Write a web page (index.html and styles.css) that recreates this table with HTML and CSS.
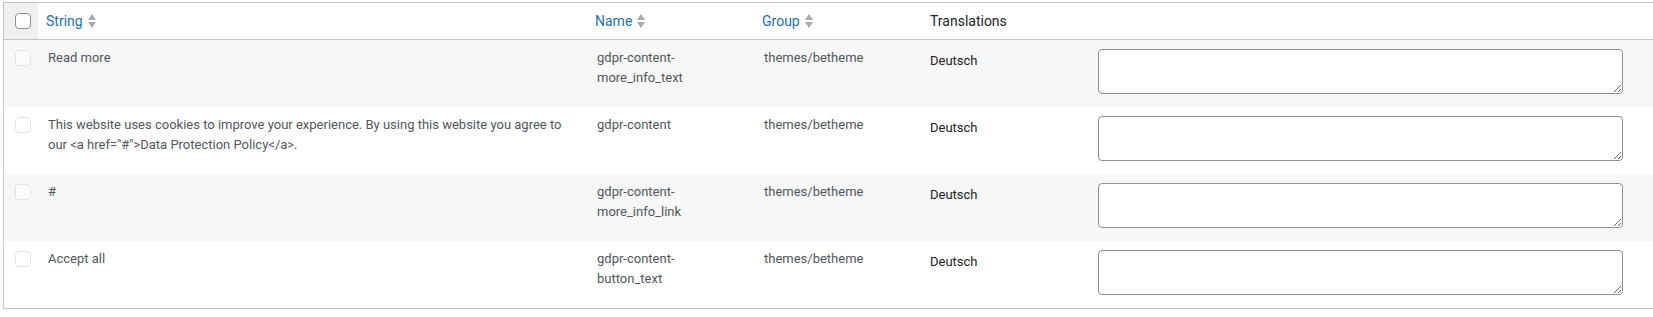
FILE: index.html
```html
<!DOCTYPE html>
<html lang="en">
<head>
<meta charset="utf-8">
<title>Strings</title>
<link rel="stylesheet" href="styles.css">
</head>
<body>
<div class="wrap">
<table class="strings">
  <colgroup>
    <col class="c-cb">
    <col class="c-string">
    <col class="c-name">
    <col class="c-group">
    <col class="c-lang">
    <col class="c-field">
  </colgroup>
  <thead>
    <tr>
      <th class="check"><input type="checkbox" class="cb"></th>
      <th class="sortable"><a href="#">String<svg class="sort" width="8" height="14" viewBox="0 0 8 14"><path d="M4 0 L8 6 L0 6 Z"/><path d="M0 8 L8 8 L4 14 Z"/></svg></a></th>
      <th class="sortable"><a href="#">Name<svg class="sort" width="8" height="14" viewBox="0 0 8 14"><path d="M4 0 L8 6 L0 6 Z"/><path d="M0 8 L8 8 L4 14 Z"/></svg></a></th>
      <th class="sortable"><a href="#">Group<svg class="sort" width="8" height="14" viewBox="0 0 8 14"><path d="M4 0 L8 6 L0 6 Z"/><path d="M0 8 L8 8 L4 14 Z"/></svg></a></th>
      <th class="plain">Translations</th>
      <th class="plain"></th>
    </tr>
  </thead>
  <tbody>
    <tr class="alt">
      <td class="check"><input type="checkbox" class="cb dim"></td>
      <td>Read more</td>
      <td>gdpr-content-<br>more_info_text</td>
      <td>themes/betheme</td>
      <td class="lang">Deutsch</td>
      <td class="field"><textarea></textarea></td>
    </tr>
    <tr>
      <td class="check"><input type="checkbox" class="cb dim"></td>
      <td>This website uses cookies to improve your experience. By using this website you agree to our &lt;a href="#"&gt;Data Protection Policy&lt;/a&gt;.</td>
      <td>gdpr-content</td>
      <td>themes/betheme</td>
      <td class="lang">Deutsch</td>
      <td class="field"><textarea></textarea></td>
    </tr>
    <tr class="alt">
      <td class="check"><input type="checkbox" class="cb dim"></td>
      <td>#</td>
      <td>gdpr-content-<br>more_info_link</td>
      <td>themes/betheme</td>
      <td class="lang">Deutsch</td>
      <td class="field"><textarea></textarea></td>
    </tr>
    <tr>
      <td class="check"><input type="checkbox" class="cb dim"></td>
      <td>Accept all</td>
      <td>gdpr-content-<br>button_text</td>
      <td>themes/betheme</td>
      <td class="lang">Deutsch</td>
      <td class="field"><textarea></textarea></td>
    </tr>
  </tbody>
</table>
</div>
</body>
</html>
```
FILE: styles.css
```css
html, body {
  margin: 0;
  padding: 0;
  background: #ffffff;
  overflow: hidden;
}
body {
  font-family: Roboto, "Liberation Sans", Arial, sans-serif;
  font-size: 13px;
  color: #50575e;
}
.wrap {
  padding: 2px 0 0 3px;
}
.strings {
  width: 1650px;
  table-layout: fixed;
  border-collapse: separate;
  border-spacing: 0;
  border: 1px solid #c3c4c7;
  border-right: 0;
}
.c-cb { width: 34px; }
.c-string { width: 549px; }
.c-name { width: 167px; }
.c-group { width: 166px; }
.c-lang { width: 168px; }

thead th {
  height: 37px;
  padding: 0;
  text-align: left;
  font-weight: 400;
  font-size: 14px;
  color: #1d2327;
  border-bottom: 1px solid #c3c4c7;
  vertical-align: middle;
  box-sizing: border-box;
}
thead th.check {
  background: #f0f0f1;
  padding: 0 0 0 11px;
}
thead th.plain {
  padding: 0 10px;
}
thead th.sortable a {
  display: inline-flex;
  align-items: center;
  gap: 5px;
  padding: 0 8px;
  color: #2271b1;
  text-decoration: none;
}
.sort {
  fill: #a7aaad;
  display: block;
}

tbody tr {
  height: 67px;
}
tbody tr.alt {
  background: #f6f7f7;
}
tbody td {
  padding: 8px 10px;
  vertical-align: top;
  line-height: 19.5px;
  font-size: 13px;
  color: #50575e;
  box-sizing: border-box;
}
tbody td.check {
  padding: 10px 0 0 11px;
}
tbody td.lang {
  padding-top: 11px;
  color: #1d2327;
  font-size: 13px;
}
tbody td.field {
  padding: 9px 10px 0 10px;
}

.cb {
  -webkit-appearance: none;
  appearance: none;
  display: block;
  margin: 0;
  width: 16px;
  height: 16px;
  border: 1px solid #8c8f94;
  border-radius: 4px;
  background: #ffffff;
  box-sizing: border-box;
}
.cb.dim {
  border-color: #e2e3e4;
  background: rgba(255, 255, 255, 0.55);
}

textarea {
  display: block;
  width: 525px;
  height: 45px;
  margin: 0;
  padding: 2px 6px;
  box-sizing: border-box;
  border: 1px solid #8c8f94;
  border-radius: 4px;
  background: #ffffff;
  font-family: inherit;
  font-size: 14px;
  resize: both;
}
```
